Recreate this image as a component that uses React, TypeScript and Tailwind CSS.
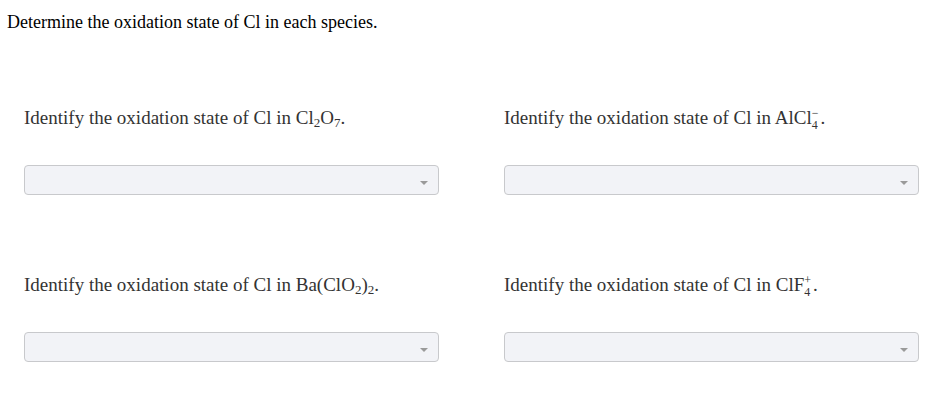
function Stack({ top, bottom }: { top: string; bottom: string }) {
  return (
    <span className="inline-flex flex-col items-start align-[7px] text-[12px] leading-[12px] mr-[2px]">
      <span>{top}</span>
      <span>{bottom}</span>
    </span>
  );
}

const questions = [
  { id: "q1", label: <>Cl<sub>2</sub>O<sub>7</sub></> },
  { id: "q2", label: <>AlCl<Stack top="−" bottom="4" /></> },
  { id: "q3", label: <>Ba(ClO<sub>2</sub>)<sub>2</sub></> },
  { id: "q4", label: <>ClF<Stack top="+" bottom="4" /></> },
];

function Dropdown() {
  return (
    <div className="w-[415px] h-[30px] rounded-[4px] border border-[#c8c9cc] bg-[#f2f3f7] flex items-center justify-end pr-[10px]">
      <div className="mt-[6px] w-0 h-0 border-l-[4px] border-r-[4px] border-t-[4px] border-l-transparent border-r-transparent border-t-[#9a9a9a]" />
    </div>
  );
}

export default function App() {
  return (
    <div
      className="w-[949px] h-[406px] bg-white text-[#333] pt-[10px]"
      style={{ fontFamily: '"Liberation Serif", "Times New Roman", serif' }}
    >
      <h1 className="pl-[7px] text-[18px] leading-[24px] text-black">
        Determine the oxidation state of Cl in each species.
      </h1>
      <div className="grid grid-cols-[480px_445px] pl-[24px] pt-[72px] gap-y-[78px]">
        {questions.map((q) => (
          <div key={q.id} className="flex flex-col gap-[35px]">
            <p className="h-[24px] text-[19px] leading-[24px] [&_sub]:text-[13px] [&_sub]:leading-none">
              Identify the oxidation state of Cl in {q.label}.
            </p>
            <Dropdown />
          </div>
        ))}
      </div>
    </div>
  );
}
